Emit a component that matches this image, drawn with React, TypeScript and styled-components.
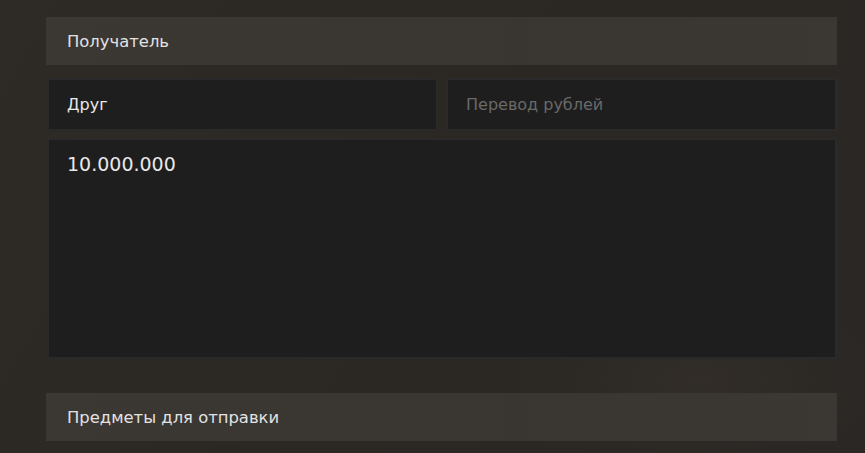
import React from "react";
import styled, { createGlobalStyle } from "styled-components";

const Global = createGlobalStyle`
  html, body { margin: 0; padding: 0; }
  body {
    width: 865px;
    height: 453px;
    overflow: hidden;
    background: #2b2824;
    font-family: "DejaVu Sans", sans-serif;
  }
`;

const Page = styled.div`
  width: 865px;
  height: 453px;
  box-sizing: border-box;
  padding: 17px 28px 0 46px;
  background:
    radial-gradient(ellipse 180px 90px at 700px 380px, rgba(70, 60, 50, 0.25), transparent),
    linear-gradient(120deg, #2e2a26 0%, #2b2824 50%, #2a2724 100%);
  display: flex;
  flex-direction: column;
`;

const SectionHeader = styled.div<{ $mt?: number }>`
  height: 48px;
  margin-top: ${(p) => p.$mt ?? 0}px;
  background: linear-gradient(90deg, #3b3834 0%, #393632 60%, #3b3834 100%);
  display: flex;
  align-items: center;
  padding-left: 21px;
  color: #e2e2e2;
  font-size: 16.4px;
`;

const Row = styled.div`
  display: grid;
  grid-template-columns: 1fr 1fr;
  gap: 8px;
  margin: 13px 0 0 1px;
`;

const Field = styled.div<{ $placeholder?: boolean }>`
  height: 53px;
  box-sizing: border-box;
  background: #1e1e1e;
  border: 2px solid #2a2a2a;
  display: flex;
  align-items: center;
  padding-left: 18px;
  font-size: 16px;
  color: ${(p) => (p.$placeholder ? "#696969" : "#e8e8e8")};
`;

const Area = styled.div`
  margin: 7px 0 0 1px;
  height: 221px;
  box-sizing: border-box;
  background: #1e1e1e;
  border: 2px solid #2a2a2a;
  padding: 13px 18px;
  font-size: 19px;
  color: #e8e8e8;
`;

export default function App() {
  return (
    <>
      <Global />
      <Page>
        <SectionHeader>Получатель</SectionHeader>
        <Row>
          <Field>Друг</Field>
          <Field $placeholder>Перевод рублей</Field>
        </Row>
        <Area>10.000.000</Area>
        <SectionHeader $mt={34}>Предметы для отправки</SectionHeader>
      </Page>
    </>
  );
}
